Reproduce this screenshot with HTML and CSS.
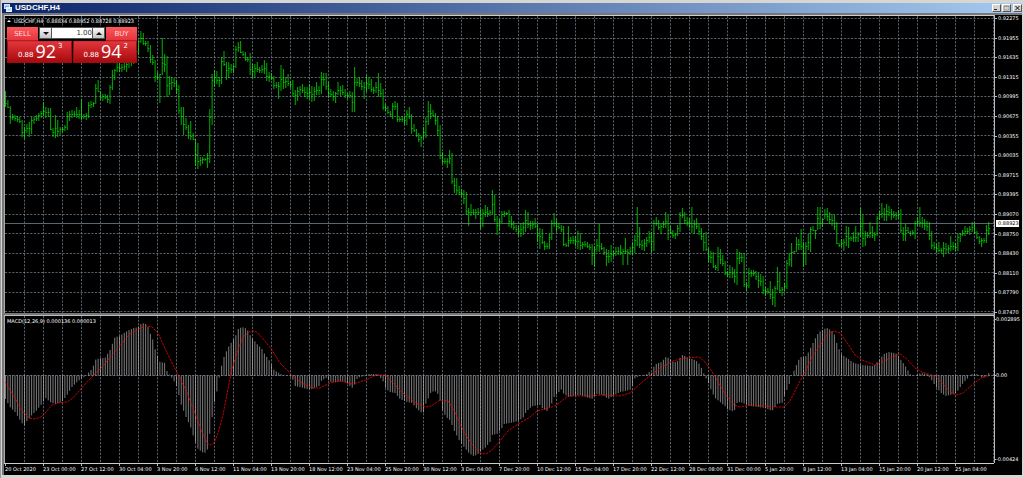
FILE: index.html
```html
<!DOCTYPE html>
<html lang="en">
<head>
<meta charset="utf-8">
<title>USDCHF,H4</title>
<link rel="stylesheet" href="styles.css">
</head>
<body>
<main class="window">
  <header class="titlebar">
    <svg class="app-icon" viewBox="0 0 8 8" aria-hidden="true">
      <rect x="0" y="0" width="6" height="5" fill="#cfe6ff"/><rect x="1" y="1.500" width="4" height="2.500" fill="#7ab2ec"/>
      <rect x="2" y="3" width="6" height="5" fill="#e4f2ff"/><path d="M3 6.5l1-1 1 .6 2-1.6" stroke="#6fa8e6" stroke-width=".8" fill="none"/>
    </svg>
    <h1 class="title">USDCHF,H4</h1>
    <div class="controls">
      <button class="control" aria-label="Minimize"><svg viewBox="0 0 7 6"><path d="M1 4.500h3" stroke="#222" /></svg></button>
      <button class="control" aria-label="Maximize"><svg viewBox="0 0 7 6"><path d="M1 1h5v4h-5zM1 1.300h5" stroke="#888" stroke-width=".7" fill="none"/></svg></button>
      <button class="control control-close" aria-label="Close"><svg viewBox="0 0 7 6"><path d="M1.500 1l4 4M5.500 1l-4 4" stroke="#111" stroke-width="1"/></svg></button>
    </div>
  </header>
  <section class="chart">
    <div class="plot plot-price">
      <svg id="price" class="canvas" viewBox="5 16 989 297" preserveAspectRatio="none"></svg>
      <div class="overlay">
        <p class="caption"><span class="arrow"></span>USDCHF,H4&nbsp; 0.88834 0.88952 0.88728 0.88923</p>
        <form class="trade">
          <div class="trade-top">
            <button type="button" class="side">SELL</button>
            <div class="volume">
              <button type="button" class="step" aria-label="Decrease volume"><span class="down"></span></button>
              <input class="lots" aria-label="Volume" value="1.00">
              <button type="button" class="step" aria-label="Increase volume"><span class="up"></span></button>
            </div>
            <button type="button" class="side">BUY</button>
          </div>
          <div class="quotes">
            <button type="button" class="quote"><span class="small">0.88</span><span class="big">92</span><span class="sup">3</span></button>
            <button type="button" class="quote"><span class="small">0.88</span><span class="big">94</span><span class="sup">2</span></button>
          </div>
        </form>
      </div>
    </div>
    <div class="separator"></div>
    <div class="plot plot-macd">
      <svg id="macd" class="canvas" viewBox="5 316 989 147" preserveAspectRatio="none"></svg>
      <p class="caption caption-macd">MACD(12,26,9) 0.000136 0.000013</p>
    </div>
    <div class="axis axis-price">
      <span>0.92275</span><span>0.91955</span><span>0.91635</span><span>0.91315</span><span>0.90995</span><span>0.90675</span><span>0.90355</span><span>0.90035</span><span>0.89715</span><span>0.89395</span><span>0.89070</span><span>0.88750</span><span>0.88430</span><span>0.88110</span><span>0.87790</span><span>0.87470</span>
      <b class="last">0.88923</b>
    </div>
    <div class="axis axis-macd"><span>0.002895</span><span class="zero">0.00</span><span>-0.00424</span></div>
    <div class="times">
      <span>20 Oct 2020</span><span>23 Oct 00:00</span><span>27 Oct 12:00</span><span>30 Oct 04:00</span><span>3 Nov 20:00</span><span>6 Nov 12:00</span><span>11 Nov 04:00</span><span>13 Nov 20:00</span><span>18 Nov 12:00</span><span>23 Nov 04:00</span><span>25 Nov 20:00</span><span>30 Nov 12:00</span><span>3 Dec 04:00</span><span>7 Dec 20:00</span><span>10 Dec 12:00</span><span>15 Dec 04:00</span><span>17 Dec 20:00</span><span>22 Dec 12:00</span><span>28 Dec 08:00</span><span>31 Dec 00:00</span><span>5 Jan 20:00</span><span>8 Jan 12:00</span><span>13 Jan 04:00</span><span>15 Jan 20:00</span><span>20 Jan 12:00</span><span>25 Jan 04:00</span>
    </div>
  </section>
</main>
<script src="chart.js"></script>
</body>
</html>
```
FILE: styles.css
```css
* { box-sizing: border-box; }
body {
  margin: 0;
  background: #d8d6d2;
  font-family: "DejaVu Sans", sans-serif;
  font-size: 5px;
}
h1, p { margin: 0; }
button, input { font: inherit; border: 0; padding: 0; margin: 0; border-radius: 0; }
.window {
  min-height: 100vh;
  display: flex;
  flex-direction: column;
  padding: 3px 2px 3px 1px;
  border-left: 1px solid #9a9a9a;
}
.titlebar {
  display: flex;
  align-items: center;
  gap: 3px;
  height: 10px;
  padding: 0 0 0 2px;
  background: linear-gradient(90deg, #0a246a, #a6caf0);
}
.app-icon { width: 8px; height: 8px; }
.title {
  flex: 1;
  color: #fff;
  font: bold 8px/10px "Liberation Sans", sans-serif;
}
.controls { display: flex; gap: 1px; }
.control {
  width: 9px;
  height: 8px;
  background: #d6d3ce;
  border: 1px solid;
  border-color: #fff #555 #555 #fff;
}
.control-close { margin-left: 1px; }
.control svg { display: block; width: 100%; height: 100%; }
.chart {
  flex: 1;
  display: grid;
  grid-template-columns: minmax(0, 1fr) 28px;
  grid-template-rows: 298fr 3px 147fr 12px;
  background: #000;
  border: solid #777;
  border-width: 2px 0 0 2px;
  color: #fff;
}
.plot {
  position: relative;
  grid-column: 1;
  min-width: 0;
  min-height: 0;
  border-left: 1px solid #aaa;
}
.plot-price { grid-row: 1; border-top: 1px solid #ccc; }
.plot-macd { grid-row: 3; }
.canvas { position: absolute; width: 100%; height: 100%; }
.separator {
  grid-row: 2;
  grid-column: 1;
  border-top: 2px solid #777;
  border-bottom: 1px solid #bbb;
}
.axis {
  grid-column: 2;
  position: relative;
  display: flex;
  flex-direction: column;
  justify-content: space-between;
  border-left: 1px solid #bbb;
  line-height: 5px;
}
.axis span { display: flex; align-items: center; white-space: nowrap; gap: 1px; }
.axis span::before { content: ""; width: 2px; height: 1px; background: #bbb; }
.axis-price { grid-row: 1 / 3; padding: 1px 0; }
.axis-macd { grid-row: 3; padding: 1px 0; }
.axis-macd span { gap: 0; }
.axis-macd span::before { width: 1px; }
.axis-macd .zero { margin-bottom: 28px; }
.last {
  position: absolute;
  left: 1px;
  right: 3px;
  top: 68%;
  padding-left: 2px;
  background: #fff;
  color: #000;
  font-weight: normal;
  line-height: 7px;
}
.times {
  grid-row: 4;
  grid-column: 1;
  display: grid;
  grid-template-columns: repeat(26, minmax(0, 1fr));
  padding: 0 1px;
  border-top: 1px solid #ccc;
  line-height: 10px;
  white-space: nowrap;
}
.times span { background: linear-gradient(#bbb, #bbb) 0 0 / 1px 2px no-repeat; }
.overlay { position: absolute; left: 2px; top: 0; }
.caption {
  display: flex;
  align-items: center;
  gap: 3px;
  line-height: 10px;
  white-space: nowrap;
}
.caption-macd { position: absolute; left: 2px; top: 0; }
.arrow { border: 2px solid transparent; border-top: 0; border-bottom-color: #fff; }
.trade {
  width: 130px;
  margin-top: 1px;
  background: #000;
}
.trade-top { display: flex; justify-content: space-between; height: 14px; }
.side {
  width: 31px;
  color: #ffdede;
  background: linear-gradient(#ff575b, #e2373c);
  border-bottom: 1px solid #b81c21;
  font-size: 7px;
}
.volume { display: flex; width: 66px; height: 12px; padding: 1px; gap: 1px; background: #555; }
.step {
  display: grid;
  place-items: center;
  width: 11px;
  background: linear-gradient(#fafafa, #c4c4c4);
}
.lots {
  flex: 1;
  min-width: 0;
  text-align: right;
  background: #fff;
  color: #333;
  font-size: 7px;
}
.down, .up { border: 3px solid transparent; }
.down { border-top-color: #111; border-bottom: 0; }
.up { border-bottom-color: #111; border-top: 0; }
.quotes { display: flex; gap: 1px; }
.quote {
  flex: 1;
  display: flex;
  justify-content: center;
  align-items: flex-end;
  gap: 2px;
  height: 22px;
  padding: 0 0 2px 2px;
  color: #fff;
  background: linear-gradient(#e0353a, #a80a0e);
  border: 1px solid #a00c10;
  border-top-color: #d82b30;
}
.small { font-size: 7px; line-height: 9px; }
.big { font: 18px/18px "Open Sans", sans-serif; }
.sup { align-self: flex-start; font-size: 7px; line-height: 9px; }
```
FILE: chart.js
```js
// High and low of each H4 bar, one line per grid column (8 bars).
const bars = `
91-107 100-108 106-124 114-120 115-121 116-122 117-123 120-137
127-139 124-133 122-137 117-134 117-124 115-121 113-121 111-118
102-116 107-118 108-117 108-130 128-137 115-138 120-137 127-135
127-132 125-131 112-130 111-121 110-118 111-117 107-118 110-119
99-120 114-119 113-120 102-118 101-108 102-107 84-104 80-92
91-100 94-101 94-99 95-103 85-104 70-90 69-80 62-72
58-72 64-72 62-70 60-72 58-68 55-66 52-64 48-60
40-55 31-43 33-45 41-46 41-52 45-63 55-65 60-82
72-80 74-103 38-75 54-72 56-97 76-95 77-90 78-87
80-94 85-114 107-125 107-135 118-130 125-139 121-140 133-140
139-166 143-169 157-166 157-164 158-161 153-168 109-163 74-125
70-87 71-84 77-87 57-84 51-66 62-80 62-78 64-73
65-73 46-68 42-52 41-53 51-56 52-61 57-62 53-75
64-78 64-78 62-72 67-73 65-73 60-74 63-81 72-82
73-80 76-89 82-88 82-99 65-91 69-89 77-88 74-86
81-88 80-97 90-105 87-101 86-96 84-93 87-97 87-99
84-99 86-102 87-101 82-95 86-95 72-94 73-86 73-90
82-98 89-97 91-101 92-103 82-95 86-96 85-95 89-98
93-99 91-98 92-112 67-112 78-86 77-87 80-90 82-99
75-92 77-89 79-92 87-94 82-93 73-97 83-97 89-110
104-111 106-114 111-117 103-119 101-110 103-122 117-122 116-122
116-125 110-125 107-119 114-134 124-132 129-137 133-142 136-147
127-139 117-138 101-125 104-119 110-117 113-125 116-136 125-159
152-164 158-164 158-168 150-164 153-184 178-193 178-194 186-195
189-197 190-204 192-215 208-226 204-216 209-215 209-219 208-215
209-229 209-227 205-217 207-217 210-216 190-214 195-222 216-235
219-231 211-223 211-217 212-215 210-227 216-228 221-230 225-232
226-236 223-237 222-235 210-232 212-228 221-230 221-229 218-228
224-242 228-249 229-244 241-250 243-249 234-249 220-240 213-227
219-232 223-229 225-232 226-246 243-247 226-247 237-244 236-244
236-246 231-249 233-250 242-249 241-247 242-248 244-250 244-265
246-267 239-252 224-252 243-250 247-255 249-266 250-263 245-262
251-257 247-256 247-255 245-255 249-265 238-254 249-265 247-255
242-255 235-253 207-246 227-248 240-250 239-251 237-247 231-243
232-253 220-251 217-226 220-230 224-234 221-228 212-228 215-240
226-234 230-238 233-239 225-236 212-232 208-218 212-224 217-226
218-228 207-233 220-234 218-229 224-235 228-240 233-251 232-251
248-262 251-263 252-268 265-270 247-271 249-264 255-266 261-275
271-277 265-278 267-278 269-283 249-285 252-264 253-262 253-287
282-291 268-288 270-277 270-276 271-280 273-288 274-286 276-294
287-296 288-294 281-299 289-305 286-307 267-290 273-293 287-296
283-291 260-289 253-266 243-267 251-254 237-252 239-250 229-250
242-267 242-265 234-250 227-252 226-231 230-239 207-230 207-229
219-227 209-219 208-221 212-224 214-226 215-230 222-244 243-247
239-247 239-251 226-246 227-248 236-241 232-242 226-242 232-242
208-237 215-247 231-246 232-238 222-238 226-238 232-241 216-236
211-220 203-218 208-221 204-221 206-216 209-220 211-218 212-220
210-219 209-233 227-241 224-241 227-233 231-236 230-235 221-239
217-226 207-227 217-228 219-230 221-231 222-240 231-249 242-250
244-253 242-252 248-253 242-257 243-253 245-253 236-251 242-250
243-251 233-251 233-242 230-236 226-236 228-234 226-235 222-232
223-234 231-239 236-244 238-247 238-243 225-243 222-235`
  .trim().split(/\s+/).map(s => s.split('-').map(Number));

const histogram = `5,398 10,407 15,412 20,420 24,426 27,421 32,415 36,411 41,405 46,398 50,402 55,404 62,402 67,395 72,387 77,382 82,378 86,376 89,372 92,369 96,359 101,358 105,358 110,350 115,337 120,336 124,333 129,330 134,328 138,327 142,323 146,324 148,327 150,333 153,340 155,349 158,357 160,362 165,363 167,371 169,374 172,378 174,381 177,387 181,404 186,417 191,428 193,435 196,444 198,449 202,452 204,453 207,452 209,439 212,418 214,404 217,391 219,379 221,368 224,357 226,352 229,346 233,340 236,335 238,329 242,327 245,328 247,329 250,335 253,339 257,344 262,349 264,353 269,360 272,365 274,370 279,373 283,375 290,376 293,380 295,386 300,387 307,389 312,389 314,388 319,386 321,381 326,378 331,382 337,382 343,381 347,383 352,388 355,384 357,379 360,377 366,376 369,374 373,374 378,374 380,377 383,381 386,389 390,392 395,393 400,399 407,402 412,403 417,409 422,413 424,412 426,403 428,399 431,392 435,391 438,394 440,400 442,409 446,417 450,420 454,430 459,440 464,447 469,453 473,456 477,455 481,451 485,448 490,442 492,435 497,434 502,428 504,424 510,423 518,421 523,418 526,412 530,408 533,406 540,405 542,408 547,411 549,408 552,403 554,397 559,392 561,389 563,393 568,397 580,395 592,399 596,394 603,395 608,399 613,396 620,392 630,390 633,385 635,378 640,376 647,374 649,372 652,373 653,368 656,364 662,362 665,357 669,358 673,362 677,362 682,355 685,356 688,358 693,359 698,362 701,367 704,374 708,382 712,392 715,398 720,402 725,406 727,409 734,412 737,403 740,402 750,406 765,408 772,411 775,407 777,404 782,403 786,392 789,385 791,377 793,373 796,366 800,357 805,357 807,355 812,345 816,337 819,332 824,329 827,328 831,330 834,333 836,341 839,349 842,355 847,358 854,363 862,365 872,366 875,365 879,360 884,354 889,352 894,353 897,354 901,360 906,367 910,374 914,376 921,373 927,374 931,379 936,387 941,393 946,396 954,394 957,392 961,386 964,382 968,378 971,374 977,374 983,378 989,373`
  .split(' ').map(s => s.split(',').map(Number));

const signal = `5,382 10,390 15,398 20,408 25,414 29,418 35,419 41,417 46,412 52,405 58,403 67,402 73,398 80,390 88,381 95,374 102,367 112,355 122,343 130,334 138,329 147,326 152,327 158,333 163,344 172,363 180,378 187,393 195,413 202,432 207,443 210,445 214,443 218,433 223,415 227,394 232,369 238,350 243,337 249,332 254,331 258,333 265,341 272,350 280,363 290,373 295,378 305,385 313,388 320,388 330,383 340,381 353,384 366,380 376,375 385,375 395,385 405,395 416,403 425,407 431,406 440,400 448,401 454,410 460,424 466,435 473,446 480,453 486,454 492,450 500,441 508,431 518,424 530,417 537,411 545,409 555,406 568,396 590,396 603,395 620,396 630,393 640,384 652,374 662,367 673,361 685,358 699,357 704,361 711,370 717,380 725,394 734,405 740,407 750,405 765,406 775,407 784,407 790,401 800,381 806,370 813,355 820,345 828,334 834,331 840,333 848,344 855,355 862,360 875,365 888,359 900,354 907,359 915,368 922,372 935,376 943,384 950,392 956,395 963,393 972,385 981,378 989,376`;

const STEP = 2.375, LEFT = 5.5, COLUMN = 19;
const path = (d, stroke, width, extra = '') =>
  `<path d="${d}" stroke="${stroke}" stroke-width="${width}" fill="none" ${extra}/>`;

function columns(top, bottom) {
  let d = '';
  for (let x = LEFT + COLUMN; x < 994; x += COLUMN) d += `M${x} ${top}V${bottom}`;
  return path(d, '#778899', 0.7, 'stroke-dasharray="2.2 1.4"');
}

function drawPrice() {
  let rows = '', sticks = '', ticks = '';
  for (let i = 0; i < 16; i++) rows += `M5 ${Math.floor(18.5 + i * 19.56) + 0.5}H994`;
  bars.forEach(([high, low], i) => {
    const x = LEFT + i * STEP;
    const next = bars[i + 1] || [high, low];
    const top = Math.max(high, next[0]), bottom = Math.min(low, next[1]);
    const close = Math.max(high, Math.min(low, (top + bottom) / 2));
    sticks += `M${x} ${high}V${low}`;
    ticks += `M${x} ${Math.floor(close) + 0.5}h1.400`;
  });
  document.getElementById('price').innerHTML =
    columns(16, 313) +
    path(rows, '#778899', 0.7, 'stroke-dasharray="2.2 1.4"') +
    path('M5 223.500H994', '#59656f', 1) +
    path(sticks, '#00ff00', 0.7) + path(ticks, '#00ff00', 0.6);
}

function valueAt(points, x) {
  const i = Math.max(1, points.findIndex(p => p[0] >= x));
  const [x0, y0] = points[i - 1], [x1, y1] = points[i];
  return y0 + (y1 - y0) * (x - x0) / (x1 - x0);
}

function drawMacd() {
  let d = '';
  for (let x = LEFT; x < 989; x += STEP) d += `M${x} 375.500V${valueAt(histogram, x).toFixed(1)}`;
  document.getElementById('macd').innerHTML =
    columns(316, 463) +
    path('M5 375.500H994', '#8898a8', 0.7, 'stroke-dasharray="2.2 1.4"') +
    path(d, '#c0c0c0', 0.65) +
    path('M' + signal.replaceAll(' ', 'L'), '#ff0000', 0.8, 'stroke-dasharray="2.4 1"');
}

drawPrice();
drawMacd();
```
